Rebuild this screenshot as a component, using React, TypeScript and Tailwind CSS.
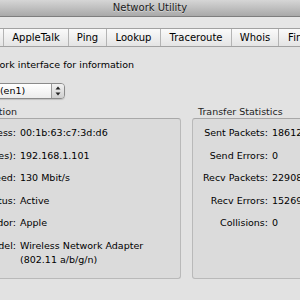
const font = { fontFamily: '"DejaVu Sans", "Liberation Sans", sans-serif' };

const tabs = [
  { label: 'Info', w: 'w-[41px]' },
  { label: 'AppleTalk', w: 'w-[65px]' },
  { label: 'Ping', w: 'w-[38px]' },
  { label: 'Lookup', w: 'w-[54px]' },
  { label: 'Traceroute', w: 'w-[71px]' },
  { label: 'Whois', w: 'w-[47px]' },
  { label: 'Finger', w: 'w-[50px]' },
];

const info: [string, string[]][] = [
  ['Hardware Address:', ['00:1b:63:c7:3d:d6']],
  ['IP Address(es):', ['192.168.1.101']],
  ['Link Speed:', ['130 Mbit/s']],
  ['Link Status:', ['Active']],
  ['Vendor:', ['Apple']],
  ['Model:', ['Wireless Network Adapter', '(802.11 a/b/g/n)']],
];

const stats: [string, string][] = [
  ['Sent Packets:', '186127'],
  ['Send Errors:', '0'],
  ['Recv Packets:', '229084'],
  ['Recv Errors:', '152690'],
  ['Collisions:', '0'],
];

function Row({ label, values, labelW }: { label: string; values: string[]; labelW: string }) {
  return (
    <div className="flex gap-[4px] leading-[14px]">
      <div className={`${labelW} shrink-0 flex justify-end`}>
        <span className="whitespace-nowrap shrink-0">{label}</span>
      </div>
      <div className="flex flex-col whitespace-nowrap">
        {values.map((v) => (
          <span key={v}>{v}</span>
        ))}
      </div>
    </div>
  );
}

export default function App() {
  return (
    <div
      style={font}
      className="w-[300px] h-[300px] overflow-hidden bg-[#e2e2e2] text-[#000] text-[9.5px] leading-[12px]"
    >
      {/* title bar */}
      <div className="h-[17px] border-b border-[#7e7e7e] bg-gradient-to-b from-[#d6d6d6] to-[#a9a9a9] flex items-center justify-center">
        <span className="text-[10px] text-[#1a1a1a] [text-shadow:0_1px_0_rgba(255,255,255,0.45)]">
          Network Utility
        </span>
      </div>
      <div className="h-[11px] bg-[#e6e6e6]" />

      {/* tabs */}
      <div className="h-[19px] border-y border-[#a2a2a2] bg-gradient-to-b from-[#fafafa] to-[#e4e4e4] flex ml-[-37px]">
        {tabs.map((t) => (
          <div
            key={t.label}
            className={`${t.w} shrink-0 border-r border-[#b4b4b4] flex items-center justify-center text-[10px] text-black`}
          >
            {t.label}
          </div>
        ))}
      </div>

      {/* body */}
      <div className="ml-[-65px] pt-[12px] flex flex-col">
        <div className="whitespace-nowrap">Select a network interface for information</div>

        <div className="ml-[21px] mt-[12px] w-[109px] h-[16px] flex rounded-[4px] border border-[#8a8a8a] shadow-[0_1px_1px_rgba(0,0,0,0.15)] overflow-hidden">
          <div className="flex-1 flex items-center pl-[8px] bg-gradient-to-b from-[#ffffff] to-[#ececec]">
            <span className="whitespace-nowrap">AirPort (en1)</span>
          </div>
          <div className="w-[13px] border-l border-[#9a9a9a] bg-gradient-to-b from-[#f2f2f2] to-[#cfcfcf] flex flex-col items-center justify-center gap-[2px]">
            <svg width="6" height="4" viewBox="0 0 6 4">
              <path d="M3 0.5 L5.5 3.5 L0.5 3.5 Z" fill="#222" />
            </svg>
            <svg width="6" height="4" viewBox="0 0 6 4">
              <path d="M0.5 0.5 L5.5 0.5 L3 3.5 Z" fill="#222" />
            </svg>
          </div>
        </div>

        <div className="ml-[21px] mt-[7px] flex gap-[11px]">
          <div className="w-[225px] shrink-0 flex flex-col">
            <div className="pl-[6px] h-[12px] text-[#222] whitespace-nowrap">Information</div>
            <div className="h-[161px] border border-[#b9b9b9] border-t-[#a8a8a8] rounded-[3px] bg-[#dbdbdb] pt-[7px] flex flex-col gap-[8.6px]">
              {info.map(([l, v]) => (
                <Row key={l} label={l} values={v} labelW="w-[59px]" />
              ))}
            </div>
          </div>
          <div className="w-[140px] shrink-0 flex flex-col">
            <div className="pl-[6px] h-[12px] text-[#222] whitespace-nowrap">Transfer Statistics</div>
            <div className="h-[161px] border border-[#b9b9b9] border-t-[#a8a8a8] rounded-[3px] bg-[#dbdbdb] pt-[7px] flex flex-col gap-[8.6px]">
              {stats.map(([l, v]) => (
                <Row key={l} label={l} values={[v]} labelW="w-[75px]" />
              ))}
            </div>
          </div>
        </div>
      </div>
    </div>
  );
}
